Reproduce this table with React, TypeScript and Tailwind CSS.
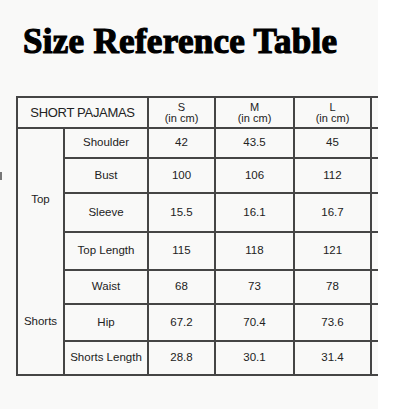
import React from "react";

const rows = [
  { label: "Shoulder", s: "42", m: "43.5", l: "45", h: "h-[30px]" },
  { label: "Bust", s: "100", m: "106", l: "112", h: "h-[35px]" },
  { label: "Sleeve", s: "15.5", m: "16.1", l: "16.7", h: "h-[39px]" },
  { label: "Top Length", s: "115", m: "118", l: "121", h: "h-[38px]" },
  { label: "Waist", s: "68", m: "73", l: "78", h: "h-[34px]" },
  { label: "Hip", s: "67.2", m: "70.4", l: "73.6", h: "h-[37px]" },
  { label: "Shorts Length", s: "28.8", m: "30.1", l: "31.4", h: "h-[34px]" },
];

const cell = "border-2 border-[#454545] text-center align-middle p-0";

export default function App() {
  return (
    <div className="w-[416px] h-[409px] flex bg-white overflow-hidden">
      <div className="w-[378px] h-full bg-[#f9f9f8] flex flex-col">
        <h1
          className="pt-[24px] pl-[23px] text-[35px] leading-[35px] font-bold text-black tracking-[0.3px] [-webkit-text-stroke:1.2px_black]"
          style={{ fontFamily: '"Liberation Serif", "Times New Roman", serif' }}
        >
          Size Reference Table
        </h1>

        <div className="flex mt-[37px]">
          <div className="w-[17px] pt-[76px]">
            <div className="w-[2px] h-[8px] bg-[#777]" />
          </div>
          <table
            className="table-fixed border-collapse w-[361px] text-[11.5px] text-[#222]"
            style={{ fontFamily: '"Liberation Sans", Arial, sans-serif' }}
          >
            <colgroup>
              <col className="w-[47px]" />
              <col className="w-[84px]" />
              <col className="w-[67px]" />
              <col className="w-[79px]" />
              <col className="w-[77px]" />
              <col className="w-[7px]" />
            </colgroup>
            <tbody>
              <tr className="h-[31px]">
                <td colSpan={2} className={`${cell} text-[13px] tracking-[-0.3px]`}>
                  SHORT PAJAMAS
                </td>
                {["S", "M", "L"].map((sz) => (
                  <td key={sz} className={`${cell} text-[11px] leading-[11px]`}>
                    <div>{sz}</div>
                    <div>(in cm)</div>
                  </td>
                ))}
                <td className="border-y-2 border-l-2 border-r-0 border-[#454545] p-0" />
              </tr>
              {rows.map((r, i) => (
                <tr key={r.label} className={r.h}>
                  {i === 0 && (
                    <td rowSpan={4} className={`${cell} border-b-0`}>
                      Top
                    </td>
                  )}
                  {i === 4 && (
                    <td rowSpan={3} className={`${cell} border-t-0`}>
                      Shorts
                    </td>
                  )}
                  <td className={cell}>{r.label}</td>
                  <td className={cell}>{r.s}</td>
                  <td className={cell}>{r.m}</td>
                  <td className={cell}>{r.l}</td>
                  <td className="border-y-2 border-l-2 border-r-0 border-[#454545] p-0" />
                </tr>
              ))}
            </tbody>
          </table>
        </div>
      </div>
    </div>
  );
}
